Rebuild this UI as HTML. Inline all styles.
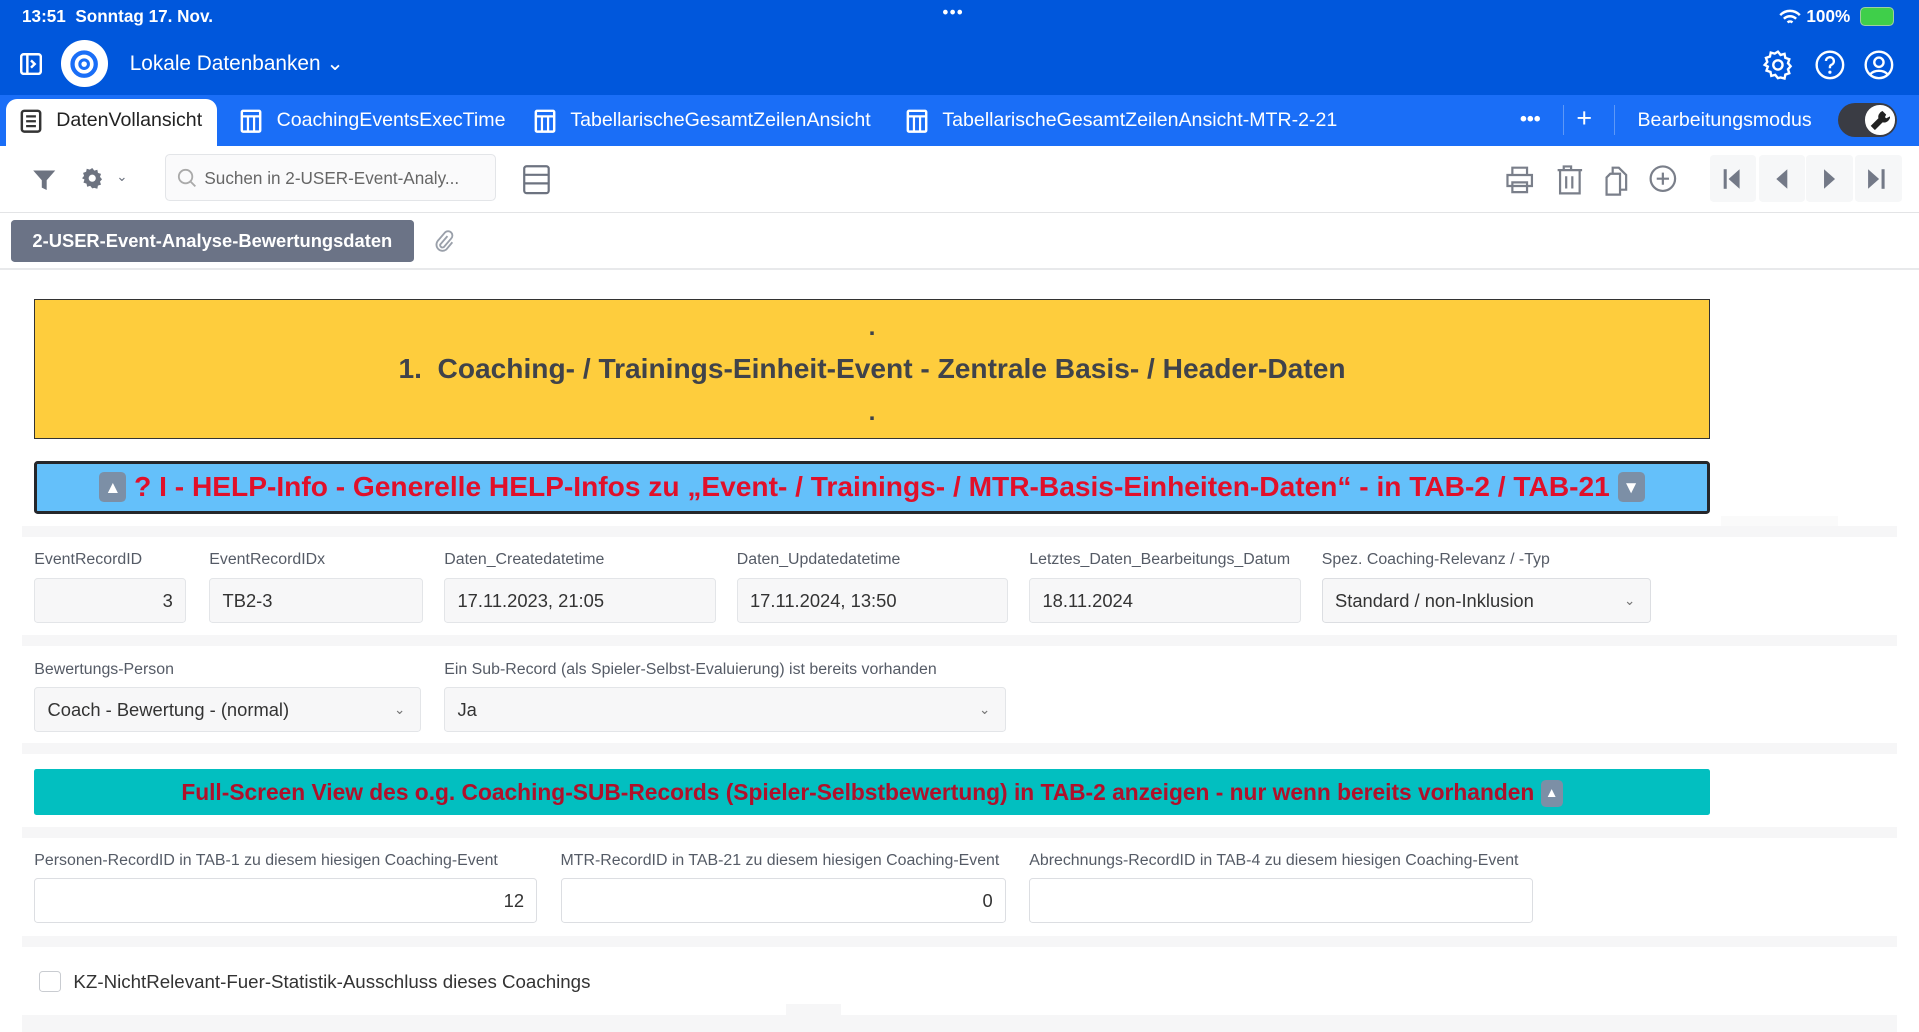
<!DOCTYPE html>
<html><head><meta charset="utf-8"><style>
html,body{margin:0;padding:0;overflow:hidden;background:#fff}
body{width:1568px;height:843px;zoom:1.22385;position:relative;font-family:"Liberation Sans",sans-serif;color:#3a3f48}
.a{position:absolute}
.top{left:0;top:0;width:1568px;height:78px;background:#0057dc}
.tabs{left:0;top:78px;width:1568px;height:41px;background:#1a6ef7}
.w{color:#fff}
.tab{top:89px;font-size:16px;color:#fff}
.lbl{font-size:13px;color:#555b66}
.inp{height:37px;border:1px solid #e3e5e8;background:#f7f7f8;border-radius:3px;box-sizing:border-box;font-size:15px;color:#333;line-height:36px;padding:0 10px}
.band{left:18px;width:1532px;background:#f6f6f7}
.chev{position:absolute;right:12px;top:0;font-size:11px;color:#777}
</style></head><body>
<div class="a top"></div>
<div class="a w" style="left:18px;top:5px;font-size:14px;font-weight:bold">13:51&nbsp;&nbsp;Sonntag 17. Nov.</div>
<div class="a w" style="left:770px;top:2px;font-size:14px;letter-spacing:1px">•••</div>
<div class="a w" style="left:1476px;top:5px;font-size:14px;font-weight:bold">100%</div>
<svg class="a" style="left:1454px;top:7px" width="18" height="14" viewBox="0 0 18 14"><path d="M1 5a11 11 0 0 1 16 0M4 8a7 7 0 0 1 10 0M7 11a3 3 0 0 1 4 0" stroke="#fff" stroke-width="2" fill="none"/></svg>
<div class="a" style="left:1520px;top:6px;width:26px;height:14px;border:1px solid #9ecfa0;border-radius:4px;background:#3fcf4a"></div>
<svg class="a" style="left:16px;top:43px" width="18" height="18"><rect x="1" y="1" width="16" height="16" rx="2" stroke="#fff" stroke-width="2" fill="none"/><path d="M6 1v16M9 6l3 3-3 3" stroke="#fff" stroke-width="2" fill="none"/></svg>
<div class="a" style="left:50px;top:33px;width:38px;height:38px;border-radius:50%;background:#fff"></div>
<svg class="a" style="left:55px;top:38px" width="28" height="28"><circle cx="14" cy="14" r="9.5" stroke="#1a6ef7" stroke-width="3.5" fill="none"/><circle cx="14" cy="14" r="3.5" stroke="#1a6ef7" stroke-width="2.5" fill="none"/></svg>
<div class="a w" style="left:106px;top:42px;font-size:17px">Lokale Datenbanken ⌄</div>
<svg class="a" style="left:1440px;top:40px" width="26" height="26" viewBox="0 0 24 24"><path d="M12 2l2 2.5 3-.8.6 3 3 1-1 3 2 2.3-2 2.3 1 3-3 1-.6 3-3-.8L12 22l-2-2.5-3 .8-.6-3-3-1 1-3L2 12l2-2.3-1-3 3-1 .6-3 3 .8z" stroke="#fff" stroke-width="1.8" fill="none"/><circle cx="12" cy="12" r="3.5" stroke="#fff" stroke-width="1.8" fill="none"/></svg>
<svg class="a" style="left:1482px;top:40px" width="26" height="26" viewBox="0 0 24 24"><circle cx="12" cy="12" r="10" stroke="#fff" stroke-width="1.8" fill="none"/><path d="M9 9a3 3 0 1 1 4 3c-1 .5-1 1-1 2.5" stroke="#fff" stroke-width="1.8" fill="none"/><circle cx="12" cy="17.5" r="1.2" fill="#fff"/></svg>
<svg class="a" style="left:1522px;top:40px" width="26" height="26" viewBox="0 0 24 24"><circle cx="12" cy="12" r="10" stroke="#fff" stroke-width="1.8" fill="none"/><circle cx="12" cy="10" r="3.5" stroke="#fff" stroke-width="1.8" fill="none"/><path d="M5.5 19a8 6 0 0 1 13 0" stroke="#fff" stroke-width="1.8" fill="none"/></svg>

<div class="a tabs"></div>
<div class="a" style="left:5px;top:81px;width:172px;height:40px;background:#fff;border-radius:9px 9px 0 0"></div>
<svg class="a" style="left:16px;top:89px" width="18" height="20"><rect x="1.5" y="1.5" width="15" height="17" rx="2" stroke="#333" stroke-width="2" fill="none"/><path d="M5 6h8M5 10h8M5 14h8" stroke="#333" stroke-width="1.8"/></svg>
<div class="a tab" style="left:46px;color:#222">DatenVollansicht</div>
<svg class="a" style="left:196px;top:89px" width="18" height="20"><rect x="1.5" y="1.5" width="15" height="17" rx="1" stroke="#fff" stroke-width="2" fill="none"/><path d="M1.5 6h15M6.5 6v12M11.5 6v12" stroke="#fff" stroke-width="1.8"/></svg>
<div class="a tab" style="left:226px">CoachingEventsExecTime</div>
<svg class="a" style="left:436px;top:89px" width="18" height="20"><rect x="1.5" y="1.5" width="15" height="17" rx="1" stroke="#fff" stroke-width="2" fill="none"/><path d="M1.5 6h15M6.5 6v12M11.5 6v12" stroke="#fff" stroke-width="1.8"/></svg>
<div class="a tab" style="left:466px">TabellarischeGesamtZeilenAnsicht</div>
<svg class="a" style="left:740px;top:89px" width="18" height="20"><rect x="1.5" y="1.5" width="15" height="17" rx="1" stroke="#fff" stroke-width="2" fill="none"/><path d="M1.5 6h15M6.5 6v12M11.5 6v12" stroke="#fff" stroke-width="1.8"/></svg>
<div class="a tab" style="left:770px">TabellarischeGesamtZeilenAnsicht-MTR-2-21</div>
<div class="a w" style="left:1242px;top:88px;font-size:16px;font-weight:bold">•••</div>
<div class="a" style="left:1277px;top:86px;width:1px;height:24px;background:#5d98f7"></div>
<div class="a w" style="left:1288px;top:84px;font-size:22px">+</div>
<div class="a" style="left:1319px;top:86px;width:1px;height:24px;background:#5d98f7"></div>
<div class="a tab" style="left:1338px">Bearbeitungsmodus</div>
<div class="a" style="left:1502px;top:84px;width:48px;height:28px;border-radius:14px;background:#3a3c44"></div>
<div class="a" style="left:1524px;top:86px;width:24px;height:24px;border-radius:50%;background:#fff"></div>
<svg class="a" style="left:1528px;top:90px" width="16" height="16" viewBox="0 0 16 16"><path d="M3 14l6-6M10 2a4 4 0 0 0-2 5l-6 6 2 2 6-6a4 4 0 0 0 5-2l-2 1-2-2 1-2z" stroke="#222" stroke-width="2" fill="#222"/></svg>

<svg class="a" style="left:26px;top:137px" width="20" height="20"><path d="M1 2h18l-7 8v8l-4-2v-6z" fill="#6d7380"/></svg>
<svg class="a" style="left:65px;top:136px" width="20" height="20" viewBox="0 0 24 24"><path d="M12 2l2 2.5 3-.8.6 3 3 1-1 3 2 2.3-2 2.3 1 3-3 1-.6 3-3-.8L12 22l-2-2.5-3 .8-.6-3-3-1 1-3L2 12l2-2.3-1-3 3-1 .6-3 3 .8z" fill="#6d7380"/><circle cx="12" cy="12" r="3.5" fill="#fff"/></svg>
<div class="a" style="left:95px;top:138px;font-size:11px;color:#6d7380">⌄</div>
<div class="a" style="left:135px;top:126px;width:270px;height:38px;border:1px solid #e3e5e8;border-radius:4px;background:#fafafb;box-sizing:border-box"></div>
<svg class="a" style="left:145px;top:137px" width="16" height="16"><circle cx="7" cy="7" r="5.5" stroke="#aaa" stroke-width="1.5" fill="none"/><path d="M11 11l4 4" stroke="#aaa" stroke-width="1.5"/></svg>
<div class="a" style="left:167px;top:137px;font-size:14px;color:#666">Suchen in 2-USER-Event-Analy...</div>
<svg class="a" style="left:427px;top:135px" width="22" height="24"><rect x="1" y="1" width="20" height="22" rx="2" stroke="#6d7380" stroke-width="1.8" fill="none"/><path d="M1 8h20M1 15h20" stroke="#6d7380" stroke-width="1.8"/></svg>
<svg class="a" style="left:1230px;top:134px" width="150" height="26" viewBox="0 0 150 26"><g stroke="#7a7f8a" stroke-width="1.8" fill="none"><path d="M6 9V3h12v6M2 9h20v9H2zM6 15h12v8H6z"/><path d="M43 5h20M48 5V2h6v3M45 5v19h16V5M50 10v10M55 10v10"/><path d="M86 8h8v17h-11V11zM88 8V3h5l6 6v12h-5"/><circle cx="129" cy="12" r="10"/><path d="M129 7v10M124 12h10"/></g></svg>
<div class="a" style="left:1397px;top:127px;width:38px;height:38px;background:#f6f7f8;border-radius:3px"></div>
<div class="a" style="left:1437px;top:127px;width:38px;height:38px;background:#f6f7f8;border-radius:3px"></div>
<div class="a" style="left:1476px;top:127px;width:38px;height:38px;background:#f6f7f8;border-radius:3px"></div>
<div class="a" style="left:1516px;top:127px;width:38px;height:38px;background:#f6f7f8;border-radius:3px"></div>
<svg class="a" style="left:1405px;top:137px" width="140" height="18"><g fill="#737987"><rect x="3" y="1" width="2.5" height="16"/><path d="M7 9l9-8v16z"/><path d="M46 9l9-8v16z"/><path d="M85 1l9 8-9 8z"/><path d="M121 1l9 8-9 8z"/><rect x="132" y="1" width="2.5" height="16"/></g></svg>
<div class="a" style="left:0;top:173px;width:1568px;height:1px;background:#e3e4e6"></div>

<div class="a" style="left:9px;top:180px;width:329px;height:34px;background:#6b7386;border-radius:3px;color:#fff;font-size:15px;font-weight:bold;line-height:34px;text-align:center">2-USER-Event-Analyse-Bewertungsdaten</div>
<svg class="a" style="left:355px;top:188px" width="16" height="18" viewBox="0 0 16 18"><path d="M11 5l-6 7a2 2 0 0 0 3 2l6-7a3.5 3.5 0 0 0-5-5l-6 7a5 5 0 0 0 7 7l5-6" stroke="#9aa0aa" stroke-width="1.5" fill="none"/></svg>
<div class="a" style="left:0;top:219px;width:1568px;height:2px;background:#e8e9eb"></div>

<div class="a" style="left:28px;top:244px;width:1369px;height:115px;background:#fecd3d;border:1.5px solid #333;box-sizing:border-box;text-align:center;color:#40434a">
<div style="font-size:20px;font-weight:bold;position:absolute;left:0;right:0;top:12px">.</div>
<div style="font-size:23px;font-weight:bold;position:absolute;left:0;right:0;top:44px">1.&nbsp; Coaching- / Trainings-Einheit-Event - Zentrale Basis- / Header-Daten</div>
<div style="font-size:20px;font-weight:bold;position:absolute;left:0;right:0;top:81px">.</div></div>

<div class="a" style="left:28px;top:377px;width:1369px;height:43px;background:#64c0fa;border:3px solid #25272b;border-radius:3px;box-sizing:border-box;text-align:center;color:#e0102a;font-size:23px;font-weight:bold;line-height:37px;white-space:nowrap">
<span style="display:inline-block;width:22px;height:25px;background:#7c8fa6;border-radius:4px;color:#fff;font-size:14px;line-height:25px;vertical-align:3px">▲</span> <span style="color:#e0102a">?</span> I - HELP-Info - Generelle HELP-Infos zu „Event- / Trainings- / MTR-Basis-Einheiten-Daten“ - in TAB-2 / TAB-21 <span style="display:inline-block;width:22px;height:25px;background:#7c8fa6;border-radius:4px;color:#fff;font-size:14px;line-height:25px;vertical-align:3px">▼</span></div>
<div class="a" style="left:1406px;top:422px;width:96px;height:8px;background:#fafafa"></div>

<div class="a band" style="top:430px;height:9px"></div>
<div class="a lbl" style="left:28px;top:450px">EventRecordID</div>
<div class="a lbl" style="left:171px;top:450px">EventRecordIDx</div>
<div class="a lbl" style="left:363px;top:450px">Daten_Createdatetime</div>
<div class="a lbl" style="left:602px;top:450px">Daten_Updatedatetime</div>
<div class="a lbl" style="left:841px;top:450px">Letztes_Daten_Bearbeitungs_Datum</div>
<div class="a lbl" style="left:1080px;top:450px">Spez. Coaching-Relevanz / -Typ</div>
<div class="a inp" style="left:28px;top:472px;width:124px;text-align:right">3</div>
<div class="a inp" style="left:171px;top:472px;width:175px">TB2-3</div>
<div class="a inp" style="left:363px;top:472px;width:222px">17.11.2023, 21:05</div>
<div class="a inp" style="left:602px;top:472px;width:222px">17.11.2024, 13:50</div>
<div class="a inp" style="left:841px;top:472px;width:222px">18.11.2024</div>
<div class="a inp" style="left:1080px;top:472px;width:269px;border-color:#dcdee2">Standard / non-Inklusion<span class="chev">⌄</span></div>

<div class="a band" style="top:519px;height:9px"></div>
<div class="a lbl" style="left:28px;top:540px">Bewertungs-Person</div>
<div class="a lbl" style="left:363px;top:540px">Ein Sub-Record (als Spieler-Selbst-Evaluierung) ist bereits vorhanden</div>
<div class="a inp" style="left:28px;top:561px;width:316px">Coach - Bewertung - (normal)<span class="chev">⌄</span></div>
<div class="a inp" style="left:363px;top:561px;width:459px">Ja<span class="chev">⌄</span></div>

<div class="a band" style="top:607px;height:9px"></div>
<div class="a" style="left:28px;top:628px;width:1369px;height:38px;background:#02bfc0;border-radius:2px;text-align:center;color:#b0102a;font-size:18.6px;font-weight:bold;line-height:38px;white-space:nowrap">Full-Screen View des o.g. Coaching-SUB-Records (Spieler-Selbstbewertung) in TAB-2 anzeigen - nur wenn bereits vorhanden <span style="display:inline-block;width:18px;height:22px;background:#7c8fa6;border-radius:4px;color:#fff;font-size:11px;line-height:22px;vertical-align:2px">▲</span></div>

<div class="a band" style="top:676px;height:9px"></div>
<div class="a lbl" style="left:28px;top:696px">Personen-RecordID in TAB-1 zu diesem hiesigen Coaching-Event</div>
<div class="a lbl" style="left:458px;top:696px">MTR-RecordID in TAB-21 zu diesem hiesigen Coaching-Event</div>
<div class="a lbl" style="left:841px;top:696px">Abrechnungs-RecordID in TAB-4 zu diesem hiesigen Coaching-Event</div>
<div class="a inp" style="left:28px;top:717px;width:411px;background:#fff;text-align:right;border-color:#dcdee2">12</div>
<div class="a inp" style="left:458px;top:717px;width:364px;background:#fff;text-align:right;border-color:#dcdee2">0</div>
<div class="a inp" style="left:841px;top:717px;width:412px;background:#fff;border-color:#dcdee2"></div>

<div class="a band" style="top:765px;height:9px"></div>
<div class="a" style="left:32px;top:793px;width:16px;height:16px;border:1px solid #c9ccd1;border-radius:3px"></div>
<div class="a" style="left:60px;top:793px;font-size:15.3px;color:#333">KZ-NichtRelevant-Fuer-Statistik-Ausschluss dieses Coachings</div>
<div class="a" style="left:642px;top:820px;width:45px;height:10px;background:#f6f6f7"></div>
<div class="a band" style="top:829px;height:14px"></div>
</body></html>
